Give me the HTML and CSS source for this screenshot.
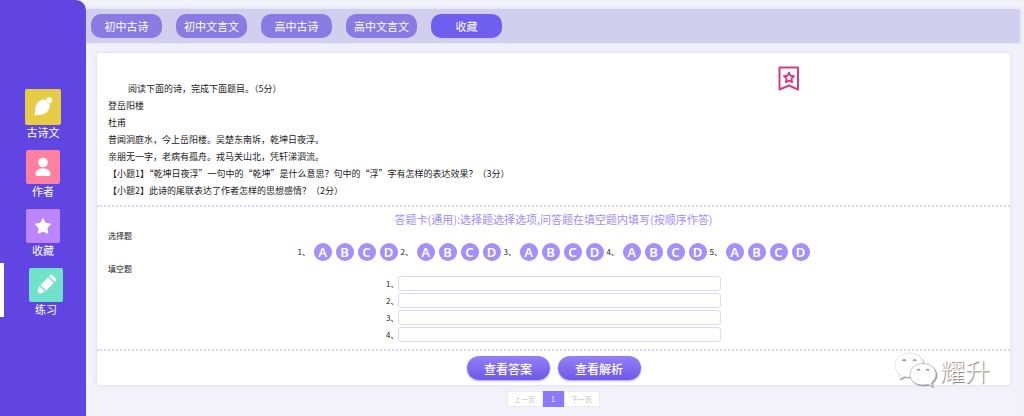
FILE: index.html
```html
<!DOCTYPE html>
<html lang="zh-CN">
<head>
    <meta charset="UTF-8">
    <meta name="viewport" content="width=device-width, initial-scale=1.0">
    <title>练习</title>
    <link rel="stylesheet" href="styles.css">
</head>
<body>
    <nav class="sidebar">
        <a class="side-item hover" href="#">
            <span class="tile yellow">
                <svg width="20" height="20" viewBox="0 0 20 20"><path d="M1 18.500C3 15 1.500 12 3 8.500C5 3.500 10.500 1 14.500 3.500C18.500 7 17 13.500 12 16.500C8.500 18.500 5 17.500 1 18.500Z" fill="#fff"/><circle cx="16.300" cy="3.200" r="3.100" fill="#fff" stroke="#e6cb45" stroke-width="0.500"/></svg>
            </span>
            <span>古诗文</span>
        </a>
        <a class="side-item" href="#">
            <span class="tile pink">
                <svg width="18" height="20" viewBox="0 0 18 20"><circle cx="9" cy="5.500" r="4.800" fill="#fff"/><path d="M1.500 17C1.500 13.500 4.500 11.500 9 11.500S16.500 13.500 16.500 17Q16.500 19 14.500 19H3.500Q1.500 19 1.500 17Z" fill="#fff"/></svg>
            </span>
            <span>作者</span>
        </a>
        <a class="side-item" href="#">
            <span class="tile purple">
                <svg width="18" height="18" viewBox="0 0 18 18"><path d="M9 2L11.200 6.500L16.200 7.200L12.600 10.700L13.500 15.700L9 13.700L4.500 15.700L5.400 10.700L1.800 7.200L6.800 6.500Z" fill="#fff" stroke="#fff" stroke-width="1.500" stroke-linejoin="round"/></svg>
            </span>
            <span>收藏</span>
        </a>
        <a class="side-item active" href="#">
            <span class="tile green">
                <svg width="20" height="20" viewBox="0 0 20 20"><g transform="rotate(45 10 10)" fill="#fff"><path d="M6 1.500V0Q6-1.500 7.500-1.500H12.500Q14-1.500 14 0V1.500Z"/><path d="M6 3H14V14H6Z"/><path d="M6 15.500H14L12 19.500Q10 22 8 19.500Z"/></g></svg>
            </span>
            <span>练习</span>
        </a>
    </nav>

    <main class="content">
        <div class="tabs">
            <button type="button" class="tab">初中古诗</button>
            <button type="button" class="tab">初中文言文</button>
            <button type="button" class="tab">高中古诗</button>
            <button type="button" class="tab">高中文言文</button>
            <button type="button" class="tab active">收藏</button>
        </div>

        <div class="card">
            <section class="question">
                <div class="question-text">
                    <p class="intro">阅读下面的诗，完成下面题目。（5分）</p>
                    <p>登岳阳楼</p>
                    <p>杜甫</p>
                    <p>昔闻洞庭水，今上岳阳楼。吴楚东南坼，乾坤日夜浮。</p>
                    <p>亲朋无一字，老病有孤舟。戎马关山北，凭轩涕泗流。</p>
                    <p>【小题1】“乾坤日夜浮”一句中的“乾坤”是什么意思？句中的“浮”字有怎样的表达效果？（3分）</p>
                    <p>【小题2】此诗的尾联表达了作者怎样的思想感情？（2分）</p>
                </div>
                <button type="button" class="favorite" aria-label="收藏">
                    <svg width="22" height="25" viewBox="0 0 22 25" fill="none" stroke="#d93a88" stroke-width="2" stroke-linejoin="round"><path d="M1.500 1.500H20V23.500L11 19.500L1.500 23.500Z"/><path d="M11 6.500L12.500 9.700L16 10.200L13.500 12.700L14.100 16.200L11 14.500L7.900 16.200L8.500 12.700L6 10.200L9.500 9.700Z" stroke-width="1.900"/></svg>
                </button>
            </section>

            <section class="answers">
                <h2>答题卡(通用):选择题选择选项,问答题在填空题内填写(按顺序作答)</h2>
                <h3>选择题</h3>
                <div class="choices">
                    <div class="choice">
                        <span class="num">1、</span>
                        <label><input type="radio" name="q1"><span>A</span></label>
                        <label><input type="radio" name="q1"><span>B</span></label>
                        <label><input type="radio" name="q1"><span>C</span></label>
                        <label><input type="radio" name="q1"><span>D</span></label>
                    </div>
                    <div class="choice">
                        <span class="num">2、</span>
                        <label><input type="radio" name="q2"><span>A</span></label>
                        <label><input type="radio" name="q2"><span>B</span></label>
                        <label><input type="radio" name="q2"><span>C</span></label>
                        <label><input type="radio" name="q2"><span>D</span></label>
                    </div>
                    <div class="choice">
                        <span class="num">3、</span>
                        <label><input type="radio" name="q3"><span>A</span></label>
                        <label><input type="radio" name="q3"><span>B</span></label>
                        <label><input type="radio" name="q3"><span>C</span></label>
                        <label><input type="radio" name="q3"><span>D</span></label>
                    </div>
                    <div class="choice">
                        <span class="num">4、</span>
                        <label><input type="radio" name="q4"><span>A</span></label>
                        <label><input type="radio" name="q4"><span>B</span></label>
                        <label><input type="radio" name="q4"><span>C</span></label>
                        <label><input type="radio" name="q4"><span>D</span></label>
                    </div>
                    <div class="choice">
                        <span class="num">5、</span>
                        <label><input type="radio" name="q5"><span>A</span></label>
                        <label><input type="radio" name="q5"><span>B</span></label>
                        <label><input type="radio" name="q5"><span>C</span></label>
                        <label><input type="radio" name="q5"><span>D</span></label>
                    </div>
                </div>
                <h3>填空题</h3>
                <div class="blanks">
                    <div class="blank"><label for="b1">1、</label><input type="text" id="b1"></div>
                    <div class="blank"><label for="b2">2、</label><input type="text" id="b2"></div>
                    <div class="blank"><label for="b3">3、</label><input type="text" id="b3"></div>
                    <div class="blank"><label for="b4">4、</label><input type="text" id="b4"></div>
                </div>
            </section>

            <div class="actions">
                <button type="button" class="action-btn">查看答案</button>
                <button type="button" class="action-btn">查看解析</button>
            </div>
        </div>

        <div class="pagination">
            <button type="button" class="page-btn" disabled>上一页</button>
            <button type="button" class="page-btn current">1</button>
            <button type="button" class="page-btn" disabled>下一页</button>
        </div>
    </main>

    <div class="watermark">
        <svg width="44" height="36" viewBox="0 0 44 36" fill="#fff" stroke="#dcdcdf" stroke-width="0.700">
            <path d="M15 1C6.500 1 1 6.500 1 13C1 17 3 20.500 6.500 23L5.500 27L10.500 24.500C12 25 14 25.200 16 25C24 25 29.500 19.500 29.500 13C29.500 6 23.500 1 15 1Z"/>
            <path d="M29 11.500C21 11.500 16 16.500 16 22.500S21 33 29 33C31 33 32.500 32.700 34 32.200L38.500 34.500L37.500 30.800C40 28.800 42 26 42 22.500C42 16.500 36.500 11.500 29 11.500Z" stroke="#aaa"/>
            <g fill="none" stroke="#8f8f94" stroke-width="1.300"><path d="M8.500 9Q10 6.500 11.800 9"/><path d="M19 9Q20.700 6.500 22.300 9"/><path d="M23 18.500Q24.500 16.300 26 18.500"/><path d="M32 18.500Q33.500 16.300 35 18.500"/></g>
        </svg>
        <span>耀升</span>
    </div>
</body>
</html>
```

FILE: styles.css
```css
* {
    margin: 0;
    padding: 0;
    box-sizing: border-box;
}

body {
    font-family: "Noto Sans CJK SC", "Noto Sans", sans-serif;
    font-size: 9px;
    color: #222;
    background-color: #f3f2fa;
    display: flex;
    min-height: 100vh;
    position: relative;
}

button, input {
    font-family: inherit;
    border: none;
}

button {
    cursor: pointer;
}

/* sidebar */
.sidebar {
    width: 86px;
    flex-shrink: 0;
    padding-top: 84px;
    background-color: #6045e2;
    border-top-right-radius: 10px;
    display: flex;
    flex-direction: column;
    gap: 5px;
}

.side-item {
    display: flex;
    flex-direction: column;
    align-items: center;
    padding-top: 5px;
    color: white;
    font-size: 11px;
    line-height: 15px;
    text-decoration: none;
}

.side-item.active {
    border-left: 4px solid white;
    padding-left: 2px;
}

.tile {
    width: 34px;
    height: 34px;
    border-radius: 2px;
    display: flex;
    justify-content: center;
    align-items: center;
}

.tile svg {
    overflow: visible;
}

.hover .tile {
    width: 36px;
    height: 36px;
}

.yellow {
    background-color: #e6cb45;
}

.pink {
    background-color: #ff809f;
}

.purple {
    background-color: #bd86ff;
}

.green {
    background-color: #6fe2c9;
}

/* main area */
.content {
    flex: 1;
    padding-top: 9px;
    border-right: 4px solid #f1f1f3;
}

.tabs {
    display: flex;
    gap: 14px;
    padding: 5px;
    background-color: #d2ceee;
    border-radius: 2px;
    box-shadow: 0 0 4px rgba(160, 145, 240, 0.3);
}

.tab {
    width: 71px;
    height: 24px;
    border-radius: 10px;
    background-color: #8a7be2;
    color: white;
    font-size: 11px;
}

.tab.active {
    background-color: #705eee;
}

.card {
    margin: 10px 10px 0 11px;
    background-color: white;
    border-radius: 3px;
    box-shadow: 0 0 4px rgba(160, 145, 240, 0.3);
}

.question {
    display: flex;
    justify-content: space-between;
    padding: 0 23% 6px 11px;
}

.question-text {
    padding-top: 27px;
    line-height: 17px;
}

.intro {
    text-indent: 20px;
}

.favorite {
    margin-top: 13px;
    height: 25px;
    background: none;
}

.favorite svg {
    display: block;
}

.answers {
    display: flex;
    flex-direction: column;
    gap: 2px;
    padding: 4px 11px 7px;
    border-top: 2px dotted #d9d4f3;
    border-bottom: 2px dotted #d9d4f3;
}

h2 {
    text-align: center;
    color: #a08ef8;
    font-size: 11px;
    font-weight: normal;
    line-height: 17px;
}

h3 {
    font-size: 8px;
    font-weight: normal;
    line-height: 11px;
}

.choices {
    display: flex;
    justify-content: center;
    gap: 3px;
}

.choice {
    display: flex;
    gap: 4px;
}

.num {
    width: 12px;
    line-height: 18px;
    font-size: 8px;
    white-space: nowrap;
}

.choice label {
    display: grid;
    cursor: pointer;
}

.choice input, .choice label span {
    grid-area: 1 / 1;
}

.choice input {
    appearance: none;
    width: 18px;
    height: 18px;
    border-radius: 50%;
    background-color: #a48ffd;
}

.choice input:checked {
    background-color: #705eee;
}

.choice label span {
    z-index: 1;
    color: white;
    font-family: "Noto Sans", sans-serif;
    font-size: 13px;
    font-weight: 600;
    line-height: 18px;
    text-align: center;
}

.blanks {
    display: flex;
    flex-direction: column;
    align-items: center;
    gap: 2px;
}

.blank {
    display: flex;
    line-height: 15px;
}

.blank label {
    width: 12px;
    font-size: 8px;
    white-space: nowrap;
}

.blank input {
    width: 323px;
    height: 15px;
    padding: 0 4px;
    border: 1px solid #ddd7fb;
    border-radius: 3px;
    font-size: 9px;
}

.actions {
    display: flex;
    justify-content: center;
    gap: 8px;
    padding: 5px 0;
}

.action-btn {
    width: 83px;
    height: 24px;
    border-radius: 12px;
    background: linear-gradient(#9480f9, #6c59e8);
    box-shadow: 0 1px 2px rgba(90, 70, 210, 0.5);
    color: white;
    font-size: 12px;
    font-weight: 500;
}

.pagination {
    display: flex;
    justify-content: center;
    margin-top: 6px;
}

.page-btn {
    width: 36px;
    height: 16px;
    background-color: white;
    border: 1px solid #ebebef;
    color: #c4c4c8;
    font-size: 7px;
}

.page-btn.current {
    width: 21px;
    background-color: #8b78fb;
    border-color: #8b78fb;
    color: white;
}

/* floating mark over the lower right corner */
.watermark {
    position: absolute;
    right: 34px;
    bottom: 28px;
    display: flex;
    align-items: center;
    gap: 2px;
    color: white;
    font-size: 25px;
    font-weight: 300;
    line-height: 36px;
    text-shadow: 1px 1px 1px #777;
    pointer-events: none;
}

.watermark svg {
    filter: drop-shadow(1px 1px 0 #999);
}
```
